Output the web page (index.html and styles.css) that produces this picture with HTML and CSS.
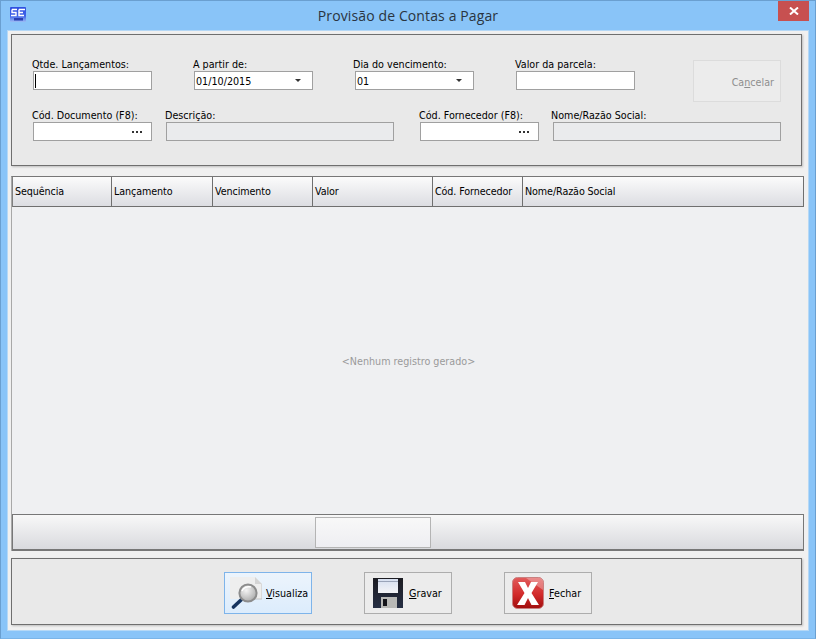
FILE: index.html
```html
<!DOCTYPE html>
<html lang="pt">
<head>
<meta charset="utf-8">
<title>Provisão de Contas a Pagar</title>
<link rel="stylesheet" href="styles.css">
</head>
<body>
<div class="titlebar">
  <svg class="app-icon" width="16" height="16" viewBox="0 0 16 16">
    <defs>
      <linearGradient id="app" x1="0" y1="0" x2="0" y2="1"><stop offset="0" stop-color="#2f4fe0"/><stop offset="0.6" stop-color="#3f63e8"/><stop offset="1" stop-color="#9cbcf4"/></linearGradient>
    </defs>
    <rect x="0" y="0" width="16" height="15" rx="1" fill="url(#app)"/>
    <path d="M2 2.5h5M2 2.5v3h4v3H1M9 2.5h6M9 2.5v6h5M9 5.5h4" fill="none" stroke="#fff" stroke-width="1.4"/>
    <rect x="4" y="11" width="9" height="2.5" fill="#2a3fb0"/>
  </svg>
  <div class="title">Provisão de Contas a Pagar</div>
  <div class="close">
    <svg width="10" height="8" viewBox="0 0 10 8"><path d="M1 0.5l8 7M9 0.5l-8 7" stroke="#fff" stroke-width="2"/></svg>
  </div>
</div>
<div class="client">
  <section class="panel form">
    <div class="row row-one">
      <label class="field w119 gap-first"><span>Qtde. Lançamentos:</span><div class="input"><i class="caret"></i></div></label>
      <label class="field w119 gap-42"><span>A partir de:</span><div class="input">01/10/2015<b class="arrow"></b></div></label>
      <label class="field w119 gap-42"><span class="tight">Dia do vencimento:</span><div class="input">01<b class="arrow"></b></div></label>
      <label class="field w119 gap-42"><span>Valor da parcela:</span><div class="input"></div></label>
      <div class="cancel"><span>Ca<u>n</u>celar</span></div>
    </div>
    <div class="row row-two">
      <label class="field w119 gap-first"><span>Cód. Documento (F8):</span><div class="input">
        <em class="dots"><i></i><i></i><i></i></em></div></label>
      <label class="field w228 gap-14"><span>Descrição:</span><div class="input off"></div></label>
      <label class="field w119 gap-26"><span>Cód. Fornecedor (F8):</span><div class="input">
        <em class="dots"><i></i><i></i><i></i></em></div></label>
      <label class="field w228 gap-14"><span class="tight">Nome/Razão Social:</span><div class="input off"></div></label>
    </div>
  </section>
  <section class="grid">
    <div class="grid-head">
      <div class="col c1">Sequência</div>
      <div class="col c2">Lançamento</div>
      <div class="col c3">Vencimento</div>
      <div class="col c4">Valor</div>
      <div class="col c5">Cód. Fornecedor</div>
      <div class="col c6">Nome/Razão Social</div>
    </div>
    <div class="grid-body">&lt;Nenhum registro gerado&gt;</div>
    <div class="scroll"><div class="thumb"></div></div>
  </section>
  <section class="panel actions">
    <button class="btn hot">
      <svg width="32" height="32" viewBox="0 0 32 32">
        <defs>
          <radialGradient id="lens" cx="40%" cy="35%" r="70%"><stop offset="0" stop-color="#f4f4f4"/><stop offset="1" stop-color="#a9a9a9"/></radialGradient>
        </defs>
        <path d="M0 0h25l7 7v15H0z" fill="#eeeeee"/>
        <path d="M25 0v7h7z" fill="#d4d4d4"/>
        <path d="M32 7v15H24" fill="none" stroke="#c4c4c4"/>
        <path d="M11 23L3.500 30" stroke="#16345f" stroke-width="3.600" stroke-linecap="round"/>
        <circle cx="18" cy="16" r="8.600" fill="url(#lens)" stroke="#8c8c8c" stroke-width="2"/>
        <path d="M12 14a7 6 0 0 1 9-4" fill="none" stroke="#fff" stroke-width="1.500"/>
      </svg>
      <span><u>V</u>isualiza</span>
    </button>
    <button class="btn save">
      <svg width="30" height="30" viewBox="0 0 30 30">
        <defs>
          <linearGradient id="disk" x1="0" y1="0" x2="0" y2="1"><stop offset="0" stop-color="#1c1c22"/><stop offset="1" stop-color="#262f44"/></linearGradient>
          <linearGradient id="label" x1="0" y1="0" x2="0" y2="1"><stop offset="0" stop-color="#d6dff0"/><stop offset="1" stop-color="#f4f4f6"/></linearGradient>
        </defs>
        <path d="M0 0h30v30H0z" fill="url(#disk)"/>
        <rect x="5" y="1" width="20" height="14" fill="url(#label)"/>
        <rect x="5" y="3" width="20" height="1" fill="#9aa4b8"/>
        <rect x="8" y="19" width="16" height="11" fill="#b9b9b6"/>
        <rect x="10" y="21" width="4" height="7" fill="#15151a"/>
      </svg>
      <span><u>G</u>ravar</span>
    </button>
    <button class="btn quit">
      <svg width="32" height="32" viewBox="0 0 32 32">
        <defs>
          <linearGradient id="red" x1="0" y1="0" x2="0" y2="1"><stop offset="0" stop-color="#e25c5c"/><stop offset="0.55" stop-color="#d22a2a"/><stop offset="1" stop-color="#a00e0e"/></linearGradient>
        </defs>
        <rect x="0.5" y="0.5" width="31" height="31" rx="5" fill="url(#red)" stroke="#c98080"/>
        <path d="M14 1h13a4 4 0 0 1 4 4v8z" fill="#fff" opacity="0.3"/>
        <path d="M6 5h7l3 6 3-6h7l-6.500 11 7.500 12h-7.500l-3.500-7-3.500 7H5l7.500-12z" fill="#fff"/>
      </svg>
      <span><u>F</u>echar</span>
    </button>
  </section>
</div>
</body>
</html>
```
FILE: styles.css
```css
* { box-sizing: border-box; }
html, body { margin: 0; height: 100%; }
body {
  width: 816px;
  height: 639px;
  overflow: hidden;
  background: #89c4f8;
  border: 1px solid #6a9fd0;
  border-bottom-color: #7ab4e8;
  font-family: "DejaVu Sans", sans-serif;
  font-size: 9.6px;
  color: #000;
  display: flex;
  flex-direction: column;
}
.titlebar {
  height: 29px;
  flex: none;
  display: flex;
  position: relative;
  justify-content: center;
}
.app-icon { position: absolute; left: 9px; top: 6px; }
.title {
  font-family: "Open Sans", sans-serif;
  font-size: 14px;
  letter-spacing: 0.12px;
  color: #2a3440;
  line-height: 30px;
}
.close {
  position: absolute;
  right: 6px;
  top: 0;
  width: 31px;
  height: 20px;
  background: #c75050;
  display: flex;
  align-items: center;
  justify-content: center;
}
.client {
  margin: 0 6px 7px 6px;
  flex: 1;
  border: 1px solid #b5d8f6;
  background: #f0f0f0;
  padding: 3px 5px 0 3px;
  display: flex;
  flex-direction: column;
  min-height: 0;
}
.panel {
  width: 791px;
  border: 1px solid #6f6f6f;
  background: #e9e9e9;
  box-shadow: 1px 1px 2px #bdbdbd;
  flex: none;
}
.form {
  height: 132px;
  padding-top: 24px;
}
.row { display: flex; }
.row-one { height: 43px; position: relative; }
.row-two { margin-top: 8px; }
.field { display: flex; flex-direction: column; flex: none; }
.field > span { line-height: 12px; height: 12px; margin-left: -1px; white-space: nowrap; }
.field > .tight { margin-left: -2px; }
.w119 { width: 119px; }
.w228 { width: 228px; }
.gap-first { margin-left: 21px; }
.gap-42 { margin-left: 42px; }
.gap-14 { margin-left: 14px; }
.gap-26 { margin-left: 26px; }
.input {
  height: 19px;
  border: 1px solid #a0a0a0;
  background: #fff;
  position: relative;
  padding-left: 1px;
  line-height: 19px;
}
.input.off { background: #eaebed; }
.caret {
  position: absolute;
  left: 1px;
  top: 2px;
  width: 1px;
  height: 14px;
  background: #000;
}
.arrow {
  position: absolute;
  right: 11px;
  top: 7px;
  border-left: 3px solid transparent;
  border-right: 3px solid transparent;
  border-top: 3px solid #333;
}
.dots {
  position: absolute;
  right: 9px;
  top: 8px;
  display: flex;
  gap: 2px;
}
.dots i { width: 2px; height: 2px; background: #333; }
.cancel {
  position: absolute;
  left: 681px;
  top: 1px;
  width: 88px;
  height: 42px;
  border: 1px solid #dcdcdc;
  background: #ececec;
  color: #8e8e8e;
  display: flex;
  align-items: center;
  justify-content: flex-end;
  padding: 2px 6px 0 0;
}
.grid {
  margin-top: 10px;
  width: 793px;
  height: 375px;
  flex: none;
  background: #eff0f2;
  border-left: 1px solid #a8a8a8;
  border-top: 1px solid #777;
  display: flex;
  flex-direction: column;
}
.grid-head {
  display: flex;
  height: 30px;
  flex: none;
  background: linear-gradient(#fbfbfb, #dcdde2);
  border: 1px solid #6f6f6f;
  border-top: 0;
  border-left: 1px solid #808080;
}
.col {
  line-height: 29px;
  padding-left: 2px;
  border-right: 1px solid #6f6f6f;
  white-space: nowrap;
  flex: none;
  letter-spacing: -0.1px;
}
.c1 { width: 99px; }
.c2 { width: 101px; }
.c3 { width: 100px; }
.c4 { width: 120px; }
.c5 { width: 90px; }
.c6 { flex: 1; border-right: 0; }
.grid-body {
  flex: 1;
  display: flex;
  align-items: center;
  justify-content: center;
  color: #9a9a9a;
  padding: 1px 0 0 1px;
  min-height: 0;
}
.scroll {
  height: 37px;
  flex: none;
  background: linear-gradient(#f8f8f8, #d9dade);
  border: 1px solid #777;
  border-bottom-width: 2px;
  display: flex;
  padding: 2px 0 0 302px;
  align-items: flex-start;
}
.thumb {
  width: 116px;
  height: 31px;
  border: 1px solid #b4b4b4;
  background: linear-gradient(#f8f8f8, #eeeef2);
}
.actions {
  margin-top: 7px;
  height: 67px;
  display: flex;
  gap: 52px;
  padding: 13px 0 0 212px;
}
.btn {
  width: 88px;
  height: 42px;
  border: 1px solid #adadad;
  background: #ececec;
  font: inherit;
  color: #000;
  padding: 0 0 0 8px;
  display: flex;
  align-items: center;
}
.btn svg { flex: none; }
.btn span { padding-top: 1px; }
.btn.save { gap: 6px; }
.btn.quit { padding-left: 7px; gap: 5px; }
.btn.hot {
  border-color: #7eb4ea;
  background: linear-gradient(#ecf4fc, #dcecfc);
  padding-left: 5px;
  gap: 4px;
}
```
